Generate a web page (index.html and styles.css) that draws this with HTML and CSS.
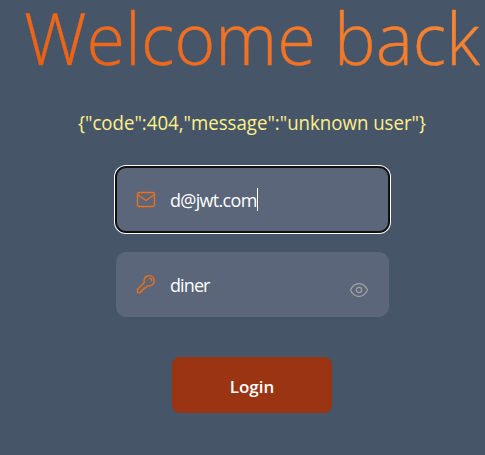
FILE: index.html
```html
<!DOCTYPE html>
<html lang="en">
<head>
<meta charset="utf-8">
<title>Login</title>
<link rel="stylesheet" href="styles.css">
</head>
<body>
<main class="login">
  <h1 class="title"><svg class="title-art" viewBox="0 0 485 90"><defs><linearGradient id="g" gradientUnits="userSpaceOnUse" x1="180" y1="180" x2="330" y2="-120"><stop offset="0" stop-color="#ea580c"/><stop offset="1" stop-color="#fb923c"/></linearGradient></defs><text x="24" y="65" textLength="456" lengthAdjust="spacingAndGlyphs" fill="url(#g)" stroke="url(#g)">Welcome back</text></svg></h1>
  <p class="error"><svg class="error-art" viewBox="0 0 350 30"><text x="0" y="21" textLength="348" lengthAdjust="spacingAndGlyphs">{"code":404,"message":"unknown user"}</text></svg></p>
  <form class="form">
    <div class="field focused">
      <svg class="icon" viewBox="0 0 20 20"><rect x="1.5" y="3.5" width="17" height="14" rx="1.5"/><path d="M1.8 5.800 10 11.500l8.200-5.700"/></svg>
      <span class="value email">d@jwt.com</span><span class="caret"></span>
    </div>
    <div class="field">
      <svg class="icon" viewBox="0 0 20 20"><path d="M8.300 8.500A5.100 5.100 0 1 1 11.700 11.700L9.500 14H7.700v1.700H6v1.700H4.700v1.200H1.500v-3.100Z"/><path d="M13.500 4.300q2.200 0 2.300 2.300"/></svg>
      <span class="value password">diner</span>
      <svg class="eye" viewBox="0 0 20 20"><path d="M1.500 10C5.400 1.500 14.600 1.500 18.500 10 14.600 18.500 5.400 18.500 1.500 10Z"/><circle cx="10" cy="10" r="2.700"/></svg>
    </div>
    <button class="submit" type="button">Login</button>
  </form>
</main>
</body>
</html>
```
FILE: styles.css
```css
* { box-sizing: border-box; }
body { margin: 0; background: #475569; font-family: "Open Sans", "Noto Sans", sans-serif; }
.login { width: 485px; height: 455px; overflow: hidden; }
.title { margin: 0; height: 80px; }
.title-art { display: block; width: 485px; height: 90px; overflow: visible; font-size: 71.5px; font-weight: 300; stroke-width: .4; }
.error { margin: 29px 0 0 78px; height: 30px; }
.error-art { display: block; width: 350px; height: 30px; overflow: visible; font-size: 20px; fill: #fef08a; }
.form { display: flex; flex-direction: column; gap: 20px; width: 273px; margin: 28px 0 0 116px; }
.field { display: flex; align-items: center; height: 65px; padding: 0 20px; border-radius: 10px; background: #5b667a; color: #fff; font-size: 18px; }
.focused { border: 1px solid #101010; padding: 0 19px; box-shadow: 0 0 0 1px #101010, 0 0 0 2px #fff; }
.icon { width: 20px; height: 20px; margin: -2px 14px 0 0; }
.icon, .eye { fill: none; stroke: #f07018; stroke-width: 1.3; stroke-linecap: round; stroke-linejoin: round; }
.eye { width: 20px; height: 20px; margin: 10px 0 0 auto; stroke: #a3a3a3; stroke-width: 1.2; }
.email { letter-spacing: -.7px; }
.password { letter-spacing: -.9px; }
.caret { width: 1px; height: 23px; background: #fff; }
.submit { width: 160px; height: 56px; margin: 20px 0 0 56px; padding: 2px 0 0; border: 0; border-radius: 8px; background: #9a3412; color: #fff; font: 600 17px "Open Sans", sans-serif; }
```
